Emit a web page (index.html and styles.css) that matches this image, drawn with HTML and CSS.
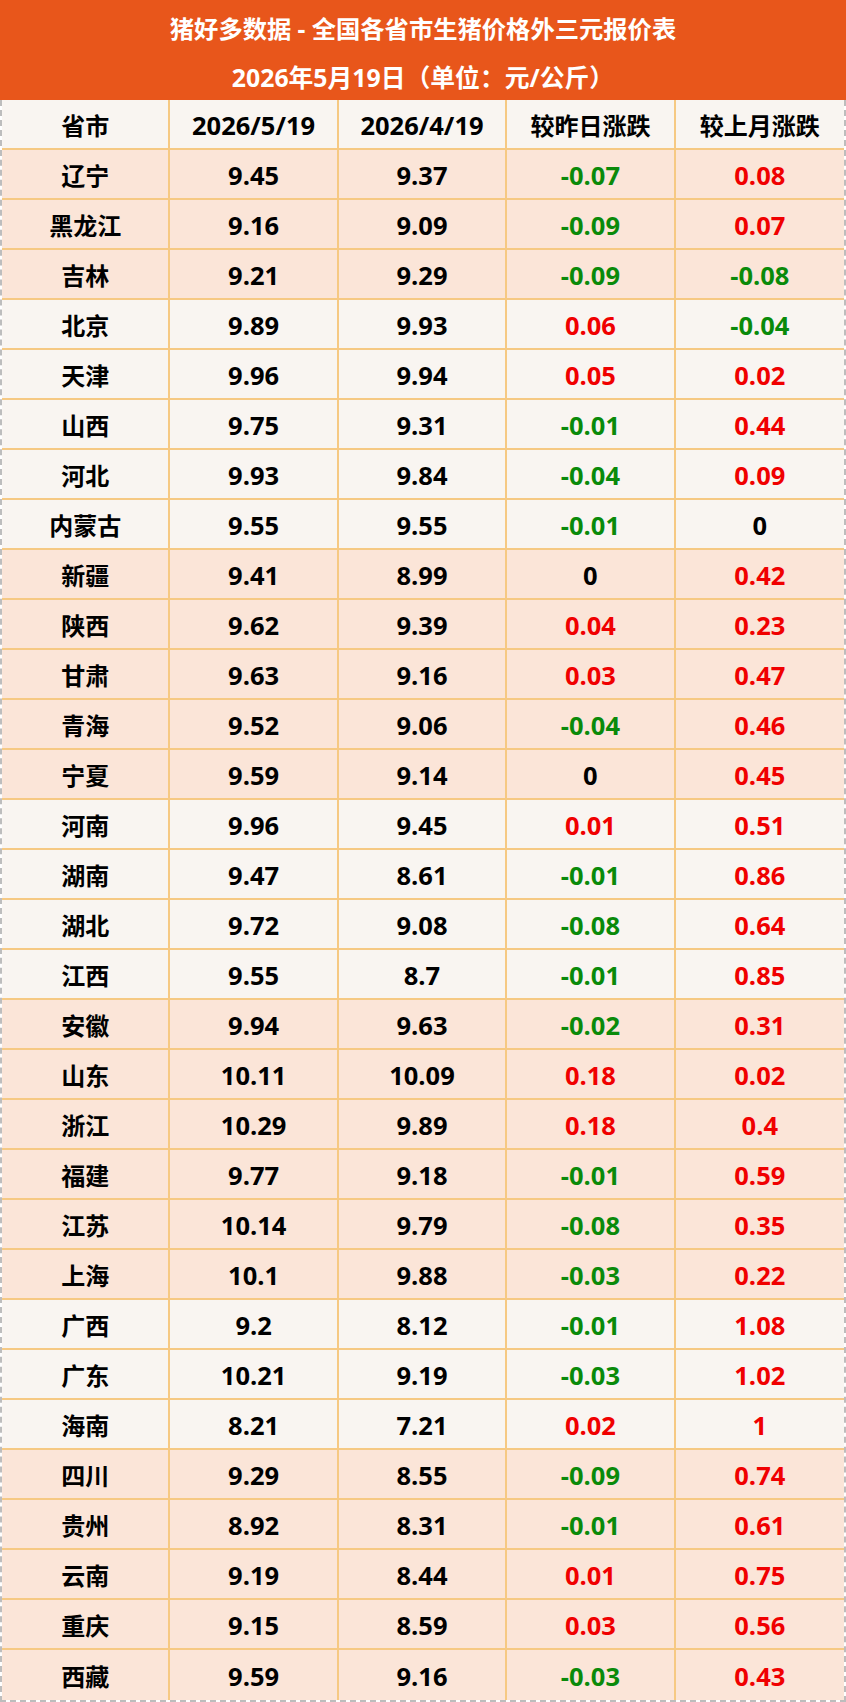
FILE: index.html
```html
<!DOCTYPE html>
<html lang="zh-CN">
<head>
<meta charset="utf-8">
<title>猪好多数据</title>
<link rel="stylesheet" href="styles.css">
</head>
<body>
<div class="sheet">
  <div class="title">
    <div class="title-line main">猪好多数据 - 全国各省市生猪价格外三元报价表</div>
    <div class="title-line sub">2026年5月19日（单位：元/公斤）</div>
  </div>
  <div class="grid">
    <div class="row head"><div class="c">省市</div><div class="c n">2026/5/19</div><div class="c n">2026/4/19</div><div class="c">较昨日涨跌</div><div class="c">较上月涨跌</div></div>

    <div class="row a"><div class="c">辽宁</div><div class="c n">9.45</div><div class="c n">9.37</div><div class="c n dn">-0.07</div><div class="c n up">0.08</div></div>
    <div class="row a"><div class="c">黑龙江</div><div class="c n">9.16</div><div class="c n">9.09</div><div class="c n dn">-0.09</div><div class="c n up">0.07</div></div>
    <div class="row a"><div class="c">吉林</div><div class="c n">9.21</div><div class="c n">9.29</div><div class="c n dn">-0.09</div><div class="c n dn">-0.08</div></div>

    <div class="row b"><div class="c">北京</div><div class="c n">9.89</div><div class="c n">9.93</div><div class="c n up">0.06</div><div class="c n dn">-0.04</div></div>
    <div class="row b"><div class="c">天津</div><div class="c n">9.96</div><div class="c n">9.94</div><div class="c n up">0.05</div><div class="c n up">0.02</div></div>
    <div class="row b"><div class="c">山西</div><div class="c n">9.75</div><div class="c n">9.31</div><div class="c n dn">-0.01</div><div class="c n up">0.44</div></div>
    <div class="row b"><div class="c">河北</div><div class="c n">9.93</div><div class="c n">9.84</div><div class="c n dn">-0.04</div><div class="c n up">0.09</div></div>
    <div class="row b"><div class="c">内蒙古</div><div class="c n">9.55</div><div class="c n">9.55</div><div class="c n dn">-0.01</div><div class="c n">0</div></div>

    <div class="row a"><div class="c">新疆</div><div class="c n">9.41</div><div class="c n">8.99</div><div class="c n">0</div><div class="c n up">0.42</div></div>
    <div class="row a"><div class="c">陕西</div><div class="c n">9.62</div><div class="c n">9.39</div><div class="c n up">0.04</div><div class="c n up">0.23</div></div>
    <div class="row a"><div class="c">甘肃</div><div class="c n">9.63</div><div class="c n">9.16</div><div class="c n up">0.03</div><div class="c n up">0.47</div></div>
    <div class="row a"><div class="c">青海</div><div class="c n">9.52</div><div class="c n">9.06</div><div class="c n dn">-0.04</div><div class="c n up">0.46</div></div>
    <div class="row a"><div class="c">宁夏</div><div class="c n">9.59</div><div class="c n">9.14</div><div class="c n">0</div><div class="c n up">0.45</div></div>

    <div class="row b"><div class="c">河南</div><div class="c n">9.96</div><div class="c n">9.45</div><div class="c n up">0.01</div><div class="c n up">0.51</div></div>
    <div class="row b"><div class="c">湖南</div><div class="c n">9.47</div><div class="c n">8.61</div><div class="c n dn">-0.01</div><div class="c n up">0.86</div></div>
    <div class="row b"><div class="c">湖北</div><div class="c n">9.72</div><div class="c n">9.08</div><div class="c n dn">-0.08</div><div class="c n up">0.64</div></div>
    <div class="row b"><div class="c">江西</div><div class="c n">9.55</div><div class="c n">8.7</div><div class="c n dn">-0.01</div><div class="c n up">0.85</div></div>

    <div class="row a"><div class="c">安徽</div><div class="c n">9.94</div><div class="c n">9.63</div><div class="c n dn">-0.02</div><div class="c n up">0.31</div></div>
    <div class="row a"><div class="c">山东</div><div class="c n">10.11</div><div class="c n">10.09</div><div class="c n up">0.18</div><div class="c n up">0.02</div></div>
    <div class="row a"><div class="c">浙江</div><div class="c n">10.29</div><div class="c n">9.89</div><div class="c n up">0.18</div><div class="c n up">0.4</div></div>
    <div class="row a"><div class="c">福建</div><div class="c n">9.77</div><div class="c n">9.18</div><div class="c n dn">-0.01</div><div class="c n up">0.59</div></div>
    <div class="row a"><div class="c">江苏</div><div class="c n">10.14</div><div class="c n">9.79</div><div class="c n dn">-0.08</div><div class="c n up">0.35</div></div>
    <div class="row a"><div class="c">上海</div><div class="c n">10.1</div><div class="c n">9.88</div><div class="c n dn">-0.03</div><div class="c n up">0.22</div></div>

    <div class="row b"><div class="c">广西</div><div class="c n">9.2</div><div class="c n">8.12</div><div class="c n dn">-0.01</div><div class="c n up">1.08</div></div>
    <div class="row b"><div class="c">广东</div><div class="c n">10.21</div><div class="c n">9.19</div><div class="c n dn">-0.03</div><div class="c n up">1.02</div></div>
    <div class="row b"><div class="c">海南</div><div class="c n">8.21</div><div class="c n">7.21</div><div class="c n up">0.02</div><div class="c n up">1</div></div>

    <div class="row a"><div class="c">四川</div><div class="c n">9.29</div><div class="c n">8.55</div><div class="c n dn">-0.09</div><div class="c n up">0.74</div></div>
    <div class="row a"><div class="c">贵州</div><div class="c n">8.92</div><div class="c n">8.31</div><div class="c n dn">-0.01</div><div class="c n up">0.61</div></div>
    <div class="row a"><div class="c">云南</div><div class="c n">9.19</div><div class="c n">8.44</div><div class="c n up">0.01</div><div class="c n up">0.75</div></div>
    <div class="row a"><div class="c">重庆</div><div class="c n">9.15</div><div class="c n">8.59</div><div class="c n up">0.03</div><div class="c n up">0.56</div></div>
    <div class="row a"><div class="c">西藏</div><div class="c n">9.59</div><div class="c n">9.16</div><div class="c n dn">-0.03</div><div class="c n up">0.43</div></div>
  </div>
</div>
</body>
</html>
```

FILE: styles.css
```css
* { box-sizing: border-box; }

html, body {
  margin: 0;
  padding: 0;
  background: #ffffff;
}

.sheet {
  width: 846px;
  font-family: "Open Sans", "Noto Sans CJK SC", sans-serif;
  font-weight: 700;
  color: #000000;
}

.title {
  height: 100px;
  background: #e8561b;
  color: #ffffff;
  display: flex;
  flex-direction: column;
  padding-top: 3px;
}

.title-line {
  height: 49px;
  display: flex;
  align-items: center;
  justify-content: center;
}

.title-line.main { font-size: 24.3px; }
.title-line.sub { font-size: 24.8px; }

.grid {
  border-left: 2px dashed #bdbdbd;
  border-right: 2px dashed #bdbdbd;
  border-bottom: 2px dashed #bdbdbd;
}

.row {
  display: grid;
  grid-template-columns: repeat(5, 1fr);
  height: 50px;
}

.row.head { background: #f9f5f1; }
.row.a { background: #fbe5d8; }
.row.b { background: #f9f5f1; }

.c {
  display: flex;
  align-items: center;
  justify-content: center;
  border-right: 2px solid #f6c983;
  border-bottom: 2px solid #f6c983;
  font-size: 24px;
  padding-top: 1px;
}

.row:last-child .c { border-bottom: none; }

.c:last-child { border-right: none; }

.c.n { font-size: 25.5px; }

.up { color: #f00000; }
.dn { color: #0a8a0a; }
```
